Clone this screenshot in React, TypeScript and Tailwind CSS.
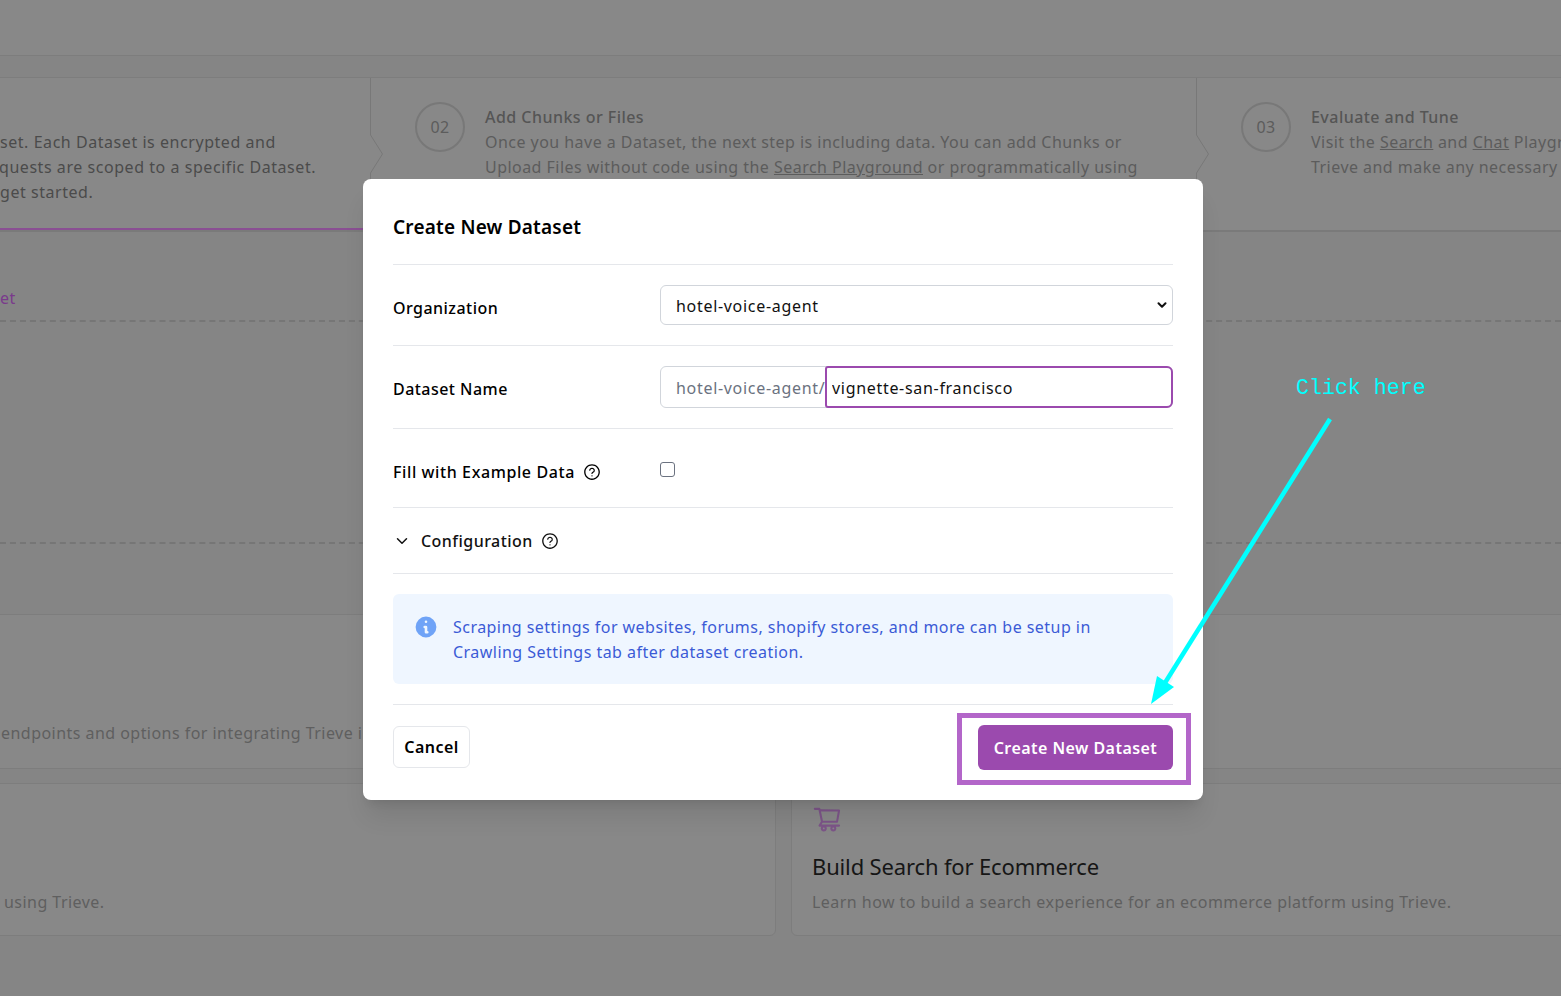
import React from 'react';
import { ChevronDown } from 'lucide-react';
import { AiOutlineQuestionCircle, AiOutlineShoppingCart } from 'react-icons/ai';
import { HiInformationCircle } from 'react-icons/hi';

function StepChevron() {
  return (
    <svg className="absolute left-[-2px] top-0 h-[154px] w-[14px]" viewBox="0 0 14 154" fill="none">
      <polyline points="1.5,0 1.5,57 13.5,76 1.5,95 1.5,154" stroke="#787878" strokeWidth="1" />
    </svg>
  );
}

function StepCircle({ n }: { n: string }) {
  return (
    <div className="w-[50px] h-[50px] shrink-0 rounded-full border-2 border-[#787878] flex items-center justify-center text-[16px] text-[#5c5c5c]">
      {n}
    </div>
  );
}

function Annotations() {
  return (
    <>
      <div className="absolute left-[1296px] top-[374px] text-[21.6px] leading-[28px] tracking-normal text-[#00ffff] font-['Liberation_Mono',monospace]">
        Click here
      </div>
      <svg className="absolute left-0 top-0 w-[1561px] h-[996px] pointer-events-none" viewBox="0 0 1561 996" fill="none">
        <line x1="1330" y1="419" x2="1163" y2="686" stroke="#00ffff" strokeWidth="4.5" />
        <polygon points="1151,704 1157,676 1174,687" fill="#00ffff" />
      </svg>
      <div className="absolute left-[957px] top-[713px] w-[234px] h-[72px] border-[5px] border-[#b366c9]" />
    </>
  );
}

export default function App() {
  return (
    <div className="relative h-[996px] w-full overflow-hidden bg-[#858585] font-['Noto_Sans',sans-serif] text-[16px] tracking-[0.46px]">
      {/* Page behind the dialog */}
      <div className="h-[56px] border-b border-[#7d7d7d] bg-[#888888]" />

      <div className="mt-[21px] h-[155px] flex border-t border-b-2 border-t-[#7d7d7d] border-b-[#7a7a7a] bg-[#888888]">
        <div className="relative w-[371px] shrink-0 pt-[52px] text-[#4b4b4b] leading-[25px] tracking-[0.55px] whitespace-nowrap overflow-hidden">
          <div>set. Each Dataset is encrypted and</div>
          <div className="-ml-[1px]">quests are scoped to a specific Dataset.</div>
          <div>get started.</div>
          <div className="absolute bottom-0 left-0 right-0 h-[2px] bg-[#8a4f93]" />
        </div>
        <div className="relative w-[826px] shrink-0 flex gap-[20px] pl-[44px] pt-[24px]">
          <StepChevron />
          <StepCircle n="02" />
          <div className="pt-[3px] leading-[25px] text-[#5c5c5c] whitespace-nowrap">
            <div className="font-medium text-[#555555]">Add Chunks or Files</div>
            <div>Once you have a Dataset, the next step is including data. You can add Chunks or</div>
            <div>
              Upload Files without code using the <span className="underline">Search Playground</span> or programmatically using
            </div>
          </div>
        </div>
        <div className="relative flex-1 min-w-0 flex gap-[20px] pl-[44px] pt-[24px]">
          <StepChevron />
          <StepCircle n="03" />
          <div className="pt-[3px] leading-[25px] text-[#5c5c5c] whitespace-nowrap">
            <div className="font-medium text-[#555555]">Evaluate and Tune</div>
            <div>
              Visit the <span className="underline">Search</span> and <span className="underline">Chat</span> Playgrounds to test
            </div>
            <div>Trieve and make any necessary changes</div>
          </div>
        </div>
      </div>

      <div className="mt-[56px] h-[20px] leading-[20px] text-[#7a3a8c]">et</div>
      <div className="mt-[12px] h-[224px] border-y-2 border-dashed border-[#767676]" />

      <div className="mt-[70px] -mx-[10px] h-[155px] border border-[#7d7d7d] bg-[#888888] pl-[10px] pt-[106px] text-[#5f5f5f] whitespace-nowrap rounded-md">
        endpoints and options for integrating Trieve into your application
      </div>

      <div className="mt-[14px] -mx-[10px] flex gap-[15px]">
        <div className="w-[786px] h-[153px] border border-[#7d7d7d] bg-[#888888] rounded-md pl-[13px] pt-[106px] text-[#5f5f5f] whitespace-nowrap">
          using Trieve.
        </div>
        <div className="flex-1 h-[153px] border border-[#7d7d7d] bg-[#888888] rounded-md pl-[20px] pt-[20px] whitespace-nowrap">
          <AiOutlineShoppingCart className="w-[30px] h-[30px] text-[#7c5488]" />
          <div className="mt-[16px] text-[22px] leading-[32px] tracking-[-0.15px] text-[#161616]">Build Search for Ecommerce</div>
          <div className="mt-[8px] leading-[24px] text-[#5f5f5f]">
            Learn how to build a search experience for an ecommerce platform using Trieve.
          </div>
        </div>
      </div>

      {/* Dialog */}
      <div className="absolute left-[363px] top-[179px] w-[840px] h-[621px] rounded-lg bg-white px-[30px] shadow-xl text-black">
        <div className="h-[86px] border-b border-[#e5e7eb] pt-[34px] text-[19px] leading-[28px] tracking-[0.2px] font-semibold">
          Create New Dataset
        </div>

        <div className="h-[81px] border-b border-[#e5e7eb] flex items-center">
          <label className="w-[267px] shrink-0 font-medium pt-[5px]">Organization</label>
          <div className="relative flex-1">
            <select className="appearance-none h-[40px] w-full rounded-md border border-[#d1d5db] bg-white pl-[15px] pt-[1px] text-[16px] tracking-[0.69px] text-[#111111]">
              <option>hotel-voice-agent</option>
            </select>
            <ChevronDown strokeWidth={3.5} className="absolute right-[4px] top-[13px] w-[14px] h-[14px] text-[#111111] pointer-events-none" />
          </div>
        </div>

        <div className="h-[83px] border-b border-[#e5e7eb] flex items-center">
          <label className="w-[267px] shrink-0 font-medium pt-[3px]">Dataset Name</label>
          <div className="flex-1 flex h-[42px] rounded-md border border-[#d1d5db] tracking-[0.69px]">
            <span className="w-[164px] shrink-0 pl-[15px] leading-[42px] text-[#6b7280] whitespace-nowrap overflow-hidden">
              hotel-voice-agent/
            </span>
            <input
              readOnly
              value="vignette-san-francisco"
              className="-my-px -mr-px flex-1 min-w-0 rounded-r-md rounded-l-[3px] border-2 border-[#9b4aae] px-[5px] pt-[1px] text-[#111111] outline-none"
            />
          </div>
        </div>

        <div className="h-[79px] border-b border-[#e5e7eb] flex items-start pt-[33px]">
          <label className="-mt-[2px] w-[267px] shrink-0 font-medium tracking-[0.6px] flex items-center gap-[8px]">
            Fill with Example Data
            <AiOutlineQuestionCircle className="w-[18px] h-[18px]" />
          </label>
          <input type="checkbox" className="appearance-none w-[15px] h-[15px] rounded-[3px] border border-[#6b7280] bg-white" />
        </div>

        <div className="h-[66px] border-b border-[#e5e7eb] flex items-center gap-[10px] text-[#111111]">
          <ChevronDown className="w-[18px] h-[18px]" />
          <span className="font-medium">Configuration</span>
          <AiOutlineQuestionCircle className="-ml-[2px] w-[18px] h-[18px]" />
        </div>

        <div className="h-[131px] border-b border-[#e5e7eb] pt-[20px]">
          <div className="h-[90px] rounded-md bg-[#eff6ff] flex gap-[14px] pl-[20px] pt-[21px] leading-[25px] text-[#3b5bd6]">
            <HiInformationCircle className="w-[26px] h-[26px] -mt-[1px] text-[#6fa3f7] shrink-0" />
            <p>
              Scraping settings for websites, forums, shopify stores, and more can be setup in
              <br />
              Crawling Settings tab after dataset creation.
            </p>
          </div>
        </div>

        <div className="flex items-start justify-between pt-[21px]">
          <button className="h-[42px] w-[77px] rounded-md border border-[#e5e7eb] bg-white font-semibold">Cancel</button>
          <button className="-mt-px h-[45px] w-[195px] rounded-md bg-[#9b4aae] text-white font-semibold">Create New Dataset</button>
        </div>
      </div>

      <Annotations />
    </div>
  );
}
